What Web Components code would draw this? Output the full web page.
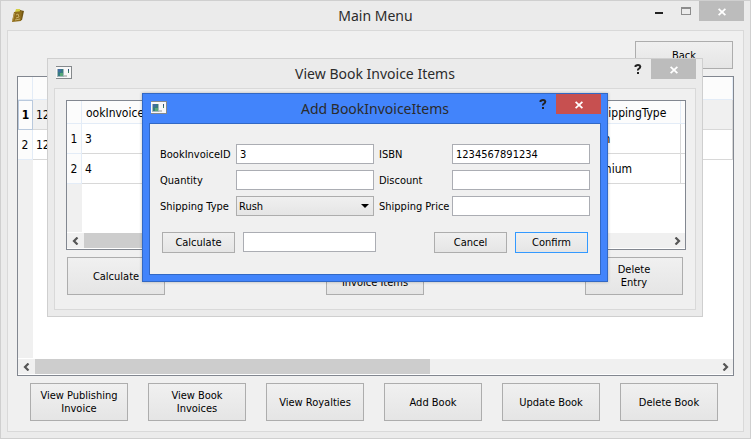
<!DOCTYPE html>
<html lang="en">
<head>
<meta charset="utf-8">
<title>Main Menu</title>
<style>
  html, body { height: 100%; }
  body {
    margin: 0;
    position: relative;
    overflow: hidden;
    background: #ebebeb;
    color: #000;
    --ui: "DejaVu Sans Condensed", "Liberation Sans", sans-serif;
    --caption: "Noto Sans", "Open Sans", sans-serif;
    font: 11px/13px var(--ui);
  }
</style>
</head>
<body>
<main-menu></main-menu>

<script>
const define = (name, html, setup) => {
  const template = document.createElement('template');
  template.innerHTML = html;
  customElements.define(name, class extends HTMLElement {
    connectedCallback() {
      if (this.shadowRoot) return;
      const root = this.attachShadow({ mode: 'open' });
      root.append(template.content.cloneNode(true));
      if (setup) setup(this, root);
    }
  });
};

/* Caption glyphs and window icons */
const icons = {
  book: `<svg width="16" height="14" viewBox="0 0 16 14"><path d="M7 1 11 1 12 4 6 4Z" fill="#d3cf45"/><path d="M11 2 15 3 13 12 10 13Z" fill="#6f5413"/><path d="M5 4 13 3 12 13 3 14Z" fill="#8f6d1b"/><path d="M7 7 9 6 10 9 7 10M6 12l5-1" fill="none" stroke="#c8b06a"/><path d="M3.500 13 5.500 5" stroke="#b79a50"/></svg>`,
  form: `<svg width="16" height="13" viewBox="0 0 16 13" shape-rendering="crispEdges"><path d="M0 0h16v13H0z" fill="#85898c"/><path d="M0 1h15v11H0z" fill="#f8f8f8"/><path d="M1 3h7v8H1z" fill="#a5b7bb"/><path d="M2 3h5v7H2z" fill="#367b82"/><path d="M2 3h3v3H2z" fill="#416ca0"/><path d="M4 7h3v3H4z" fill="#57a878"/><path d="M12 3h1v2h-1z" fill="#34517d"/><path d="M12 5h1v2h-1z" fill="#3b8060"/><path d="M8 9h3v2H8z" fill="#c5c5c5"/></svg>`,
  min: `<svg width="8" height="14" viewBox="0 0 8 14" shape-rendering="crispEdges"><path d="M0 8h8v2H0z" fill="#222"/></svg>`,
  max: `<svg width="10" height="8" viewBox="0 0 10 8" shape-rendering="crispEdges"><path d="M0 0h10v8H0zM1 2v5h8V2z" fill="#8c8c8c" fill-rule="evenodd"/></svg>`,
  help: `<svg width="8" height="10" viewBox="0 0 8 10"><path d="M1.500 3V2Q2 1 4 1t2.300 1.500Q6.300 4 5 4.600T4 6.500" fill="none" stroke="#222" stroke-width="2"/><path d="M3 8h2v2H3z" fill="#222"/></svg>`,
  close: `<svg width="8" height="8" viewBox="0 0 8 8"><path d="M.6.8 7.400 7.200M7.400.8.6 7.200" stroke="#fff" stroke-width="1.800"/></svg>`
};

define('app-window', `
  <style>
    :host {
      display: flex; flex-direction: column; box-sizing: border-box;
      padding: 0 6px 6px; background: #ebebeb; border: 1px solid #cfcfcf;
      --inner: #d9d9d9; --close: #bcbcbc;
    }
    :host([active]) { background: #4284fb; border-color: #3268c4; --inner: #3268c4; --close: #c75050; box-shadow: 0 0 3px rgba(0, 0, 0, .25); }
    header { display: grid; grid-template-columns: 1fr auto 1fr; height: 29px; }
    .icon { padding: 7px 0 0 2px; line-height: 0; }
    h1 { margin: 0; font: 14px/30px var(--caption); color: #2b2b2b; white-space: nowrap; }
    nav { display: flex; justify-content: flex-end; height: 20px; }
    button { display: grid; place-items: center; width: 27px; padding: 0; border: 0; background: none; }
    button.close { width: 45px; background: var(--close); padding-top: 1px; }
    main { flex: 1; display: flex; flex-direction: column; min-height: 0; background: #f0f0f0; border: 1px solid var(--inner); }
  </style>
  <header><span class="icon"></span><h1></h1><nav></nav></header>
  <main><slot></slot></main>`,
  (host, root) => {
    root.querySelector('h1').textContent = host.getAttribute('caption');
    root.querySelector('.icon').innerHTML = icons[host.getAttribute('icon')];
    root.querySelector('nav').innerHTML = host.getAttribute('controls').split(' ')
      .map(n => `<button class="${n}" type="button" aria-label="${n}">${icons[n]}</button>`).join('');
  });

define('push-button', `
  <style>
    :host { display: block; width: 98px; height: 38px; flex: none; }
    :host([size=back]) { height: 28px; }
    :host([size=small]) { width: 73px; height: 21px; }
    button {
      box-sizing: border-box; width: 100%; height: 100%; padding: 0;
      font: inherit; color: inherit; white-space: pre-line;
      border: 1px solid var(--edge, #adadad); background: linear-gradient(#f0f0f0, #e5e5e5);
    }
  </style>
  <button type="button"><slot></slot></button>`);

/* Label and control sit directly in the parent's grid */
define('form-field', `
  <style>
    :host { display: contents; }
    label { align-self: center; white-space: nowrap; }
    label:empty { display: none; }
    input, select {
      box-sizing: border-box; width: 100%; height: 20px; margin: 0; padding: 1px 3px 0;
      font: inherit; color: inherit; background: #fff; border: 1px solid #abadb3; border-radius: 0; outline: 0;
    }
    .combo { display: grid; align-items: center; }
    .combo > * { grid-area: 1 / 1; }
    select { appearance: none; padding: 0 2px; border-color: #adadad; background: linear-gradient(#f0f0f0, #e5e5e5); }
    svg { justify-self: end; margin-right: 5px; pointer-events: none; }
  </style>
  <label for="control"></label>`,
  (host, root) => {
    const label = root.querySelector('label');
    label.textContent = host.getAttribute('label') || '';
    const value = host.getAttribute('value') || '';
    label.insertAdjacentHTML('afterend', host.hasAttribute('combo')
      ? `<span class="combo"><select id="control"><option>${value}</option><option>Premium</option></select><svg width="8" height="4" viewBox="0 0 8 4"><path d="M0 0h8L4 4z"/></svg></span>`
      : `<input id="control" type="text" value="${value}">`);
    if (!label.textContent) root.querySelector('#control').setAttribute('aria-label', 'Calculated price');
  });

define('scroll-bar', `
  <style>
    :host { display: flex; height: 15px; margin: 1px 0; background: #f0f0f0; }
    button { display: grid; place-items: center; width: 17px; padding: 0; border: 0; background: none; }
    .track { flex: 1; }
    .thumb { height: 100%; width: var(--thumb, 70%); background: #cdcdcd; }
  </style>
  <button type="button" aria-label="Scroll left"><svg width="8" height="8" viewBox="0 0 8 8"><path d="M5.500.5 2 4l3.500 3.500" fill="none" stroke="#555" stroke-width="2.200"/></svg></button>
  <div class="track"><div class="thumb"></div></div>
  <button type="button" aria-label="Scroll right"><svg width="8" height="8" viewBox="0 0 8 8"><path d="M2.500.5 6 4 2.500 7.500" fill="none" stroke="#555" stroke-width="2.200"/></svg></button>`);

const tableStyle = `
  <style>
    :host { display: flex; flex-direction: column; border: 1px solid #828790; background: #fff; overflow: hidden; }
    .body { flex: 1; background: linear-gradient(90deg, #f0f0f0 15px, #fff 15px); }
    table { width: 100%; table-layout: fixed; border-collapse: separate; border-spacing: 0; font-size: 12px; line-height: 14px; background: #fff; }
    th, td { box-sizing: border-box; padding: 0; font-weight: normal; text-align: left; white-space: nowrap; border: solid #d8d8d8; border-width: 0 1px 1px 0; }
    thead th { height: 23px; padding-top: 2px; }
    tbody tr > * { height: 30px; }
    th { background: #fcfcfc; border-color: #e3ecf7; }
    tbody th { text-align: center; }
    td { padding-left: 3px; }
    .num { width: 15px; }
  </style>`;

define('books-table', tableStyle + `
  <style>
    .current th { font-weight: bold; border: 1px solid #b9c9dd; }
    .current td { background: #f0f0f0; }
  </style>
  <div class="body"><table>
    <thead><tr><th class="num"></th><th></th></tr></thead>
    <tbody>
      <tr class="current"><th>1</th><td>12</td></tr>
      <tr><th>2</th><td>12</td></tr>
    </tbody>
  </table></div>
  <scroll-bar></scroll-bar>`);

define('items-table', tableStyle + `
  <style>
    thead th.first { padding-left: 4px; }
    .type { width: 100px; }
    thead .type { text-align: center; }
    .rest { width: 4px; }
    thead .rest, td.rest { border-right: 0; padding: 0; }
  </style>
  <div class="body"><table>
    <thead><tr><th class="num"></th><th class="first">ookInvoiceID</th><th class="type">ShippingType</th><th class="rest"></th></tr></thead>
    <tbody>
      <tr><th>1</th><td>3</td><td>Rush</td><td class="rest"></td></tr>
      <tr><th>2</th><td>4</td><td>Premium</td><td class="rest"></td></tr>
    </tbody>
  </table></div>
  <scroll-bar></scroll-bar>`);

define('main-view', `
  <style>
    :host { flex: 1; display: flex; flex-direction: column; gap: 7px; padding: 10px 9px; min-height: 0; }
    .back { align-self: flex-end; margin-right: 1px; }
    books-table { flex: 1; --thumb: 58%; }
    .row { display: flex; justify-content: space-between; padding: 0 16px 0 13px; }
  </style>
  <push-button class="back" size="back">Back</push-button>
  <books-table></books-table>
  <div class="row">
    <push-button>View Publishing<br>Invoice</push-button>
    <push-button>View Book<br>Invoices</push-button>
    <push-button>View Royalties</push-button>
    <push-button>Add Book</push-button>
    <push-button>Update Book</push-button>
    <push-button>Delete Book</push-button>
  </div>`);

define('items-view', `
  <style>
    :host { display: flex; flex-direction: column; gap: 7px; padding: 11px 9px 14px 11px; }
    items-table { min-height: 148px; }
    .row { display: flex; justify-content: space-between; padding: 0 3px 0 1px; }
  </style>
  <items-table></items-table>
  <div class="row">
    <push-button>Calculate</push-button>
    <push-button>Add Book<br>Invoice Items</push-button>
    <push-button>Delete<br>Entry</push-button>
  </div>`);

define('add-form', `
  <style>
    :host { display: block; padding: 20px 10px 21px; }
    .fields { display: grid; grid-template-columns: 71px 1fr 68px 1fr; gap: 6px 5px; }
    .row { display: flex; justify-content: space-between; padding: 16px 2px 0; }
    .group { display: flex; gap: 8px; }
    .result { width: 133px; }
    .default { --edge: #3399ff; }
  </style>
  <div class="fields">
    <form-field label="BookInvoiceID" value="3"></form-field>
    <form-field label="ISBN" value="1234567891234"></form-field>
    <form-field label="Quantity"></form-field>
    <form-field label="Discount"></form-field>
    <form-field label="Shipping Type" value="Rush" combo></form-field>
    <form-field label="Shipping Price"></form-field>
  </div>
  <div class="row">
    <div class="group">
      <push-button size="small">Calculate</push-button>
      <div class="result"><form-field></form-field></div>
    </div>
    <div class="group">
      <push-button size="small">Cancel</push-button>
      <push-button size="small" class="default">Confirm</push-button>
    </div>
  </div>`);

define('main-menu', `
  <style>
    :host { display: block; height: 100%; }
    .main { height: 100%; }
    .items { position: absolute; left: 47px; right: 48px; top: 58px; }
    .add { position: absolute; left: 142px; right: 143px; top: 93px; }
  </style>
  <app-window class="main" caption="Main Menu" icon="book" controls="min max close"><main-view></main-view></app-window>
  <app-window class="items" caption="View Book Invoice Items" icon="form" controls="help close"><items-view></items-view></app-window>
  <app-window class="add" active caption="Add BookInvoiceItems" icon="form" controls="help close"><add-form></add-form></app-window>`);
</script>
</body>
</html>
